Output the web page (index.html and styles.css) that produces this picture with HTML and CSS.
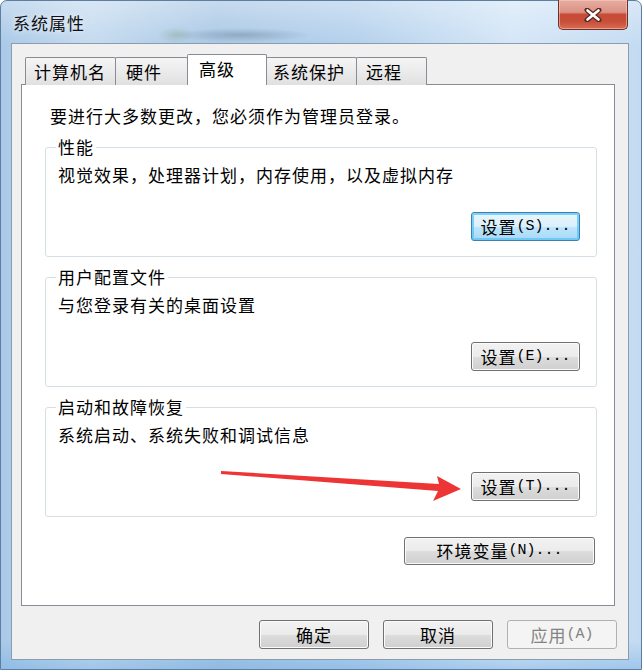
FILE: index.html
```html
<!DOCTYPE html>
<html lang="zh-CN">
<head>
<meta charset="utf-8">
<title>系统属性</title>
<link rel="stylesheet" href="styles.css">
</head>
<body>
<div class="window">
  <div class="titlebar">
    <div class="title">系统属性</div>
    <div class="close">
      <svg width="18" height="14" viewBox="0 0 18 14"><path d="M3 2 L15 12 M15 2 L3 12" stroke="#5a2a24" stroke-width="5" stroke-linecap="round"/><path d="M3.5 2.5 L14.5 11.5 M14.5 2.5 L3.5 11.5" stroke="#ffffff" stroke-width="2.6" stroke-linecap="round"/></svg>
    </div>
  </div>
  <div class="client">
    <div class="tabs">
      <div class="tab t1">计算机名</div>
      <div class="tab t2">硬件</div>
      <div class="tab t3 active">高级</div>
      <div class="tab t4">系统保护</div>
      <div class="tab t5">远程</div>
    </div>
    <div class="panel">
      <div class="intro">要进行大多数更改，您必须作为管理员登录。</div>
      <fieldset class="group">
        <legend>性能</legend>
        <div class="desc">视觉效果，处理器计划，内存使用，以及虚拟内存</div>
        <div class="btnrow"><button class="btn gbtn default">设置<span class="m">(S)...</span></button></div>
      </fieldset>
      <fieldset class="group">
        <legend>用户配置文件</legend>
        <div class="desc">与您登录有关的桌面设置</div>
        <div class="btnrow"><button class="btn gbtn">设置<span class="m">(E)...</span></button></div>
      </fieldset>
      <fieldset class="group">
        <legend>启动和故障恢复</legend>
        <div class="desc">系统启动、系统失败和调试信息</div>
        <div class="btnrow"><button class="btn gbtn">设置<span class="m">(T)...</span></button></div>
      </fieldset>
      <div class="envrow"><button class="btn envbtn">环境变量<span class="m">(N)...</span></button></div>
    </div>
    <div class="footer">
      <button class="btn fbtn">确定</button>
      <button class="btn fbtn">取消</button>
      <button class="btn fbtn disabled">应用<span class="m">(A)</span></button>
    </div>
  </div>
</div>
<svg class="arrow" width="642" height="670" viewBox="0 0 642 670">
  <polygon points="221,471 439,484 437,476 461,489 433,501 438,491 221,474" fill="#ee3535"/>
</svg>
</body>
</html>
```
FILE: styles.css
```css
html, body {
  margin: 0;
  padding: 0;
}
body {
  width: 642px;
  height: 670px;
  position: relative;
  overflow: hidden;
  font-family: "Noto Sans CJK SC", sans-serif;
  font-size: 17px;
  letter-spacing: 1px;
  color: #000;
  background: #ffffff;
}
.window {
  box-sizing: border-box;
  width: 642px;
  height: 670px;
  border: 1px solid #5f7d9e;
  border-radius: 7px 7px 0 0;
  display: flex;
  flex-direction: column;
  background:
    radial-gradient(ellipse 70px 7px at 240px 34px, rgba(85,105,125,0.35), rgba(85,105,125,0) 100%),
    radial-gradient(ellipse 18px 8px at 175px 34px, rgba(120,150,110,0.3), rgba(120,150,110,0) 100%),
    linear-gradient(180deg, rgba(255,255,255,0.35) 0, rgba(255,255,255,0) 44px),
    linear-gradient(180deg, rgba(120,175,225,0) 0, rgba(120,175,225,0) 640px, rgba(110,170,225,0.45) 670px),
    linear-gradient(90deg, #a9c9e8 0%, #c4daef 14%, #a8c7e5 34%, #b3d0ec 55%, #d4e6f7 80%, #c3dbf2 100%);
}
.titlebar {
  height: 42px;
  display: flex;
  align-items: flex-start;
  padding-left: 12px;
}
.title {
  margin-top: 12px;
  line-height: 20px;
  color: #111;
  text-shadow: 0 0 6px rgba(255,255,255,0.9);
}
.close {
  margin-left: auto;
  margin-right: 13px;
  margin-top: -1px;
  width: 70px;
  height: 30px;
  box-sizing: border-box;
  border: 1px solid #6e3028;
  border-top: none;
  border-radius: 0 0 5px 5px;
  background: linear-gradient(180deg, #e6ada2 0%, #dc9284 42%, #c84a37 50%, #c7503a 75%, #db6c53 100%);
  box-shadow: inset 0 0 0 1px rgba(255,210,200,0.5);
  display: flex;
  align-items: center;
  justify-content: center;
}
.client {
  box-sizing: border-box;
  margin: 0 12px 0 10px;
  height: 617px;
  background: #f0f0f0;
  border: 1px solid #8d9cad;
  display: flex;
  flex-direction: column;
}
.tabs {
  display: flex;
  align-items: flex-end;
  height: 30px;
  margin-top: 10px;
  padding-left: 13px;
  position: relative;
  z-index: 1;
}
.tab {
  box-sizing: border-box;
  height: 28px;
  margin-left: -1px;
  margin-bottom: -1px;
  border: 1px solid #898c95;
  border-bottom: none;
  border-radius: 2px 2px 0 0;
  background: linear-gradient(180deg, #f5f5f5 0%, #ececec 45%, #e0e0e0 100%);
  padding-left: 8px;
  line-height: 27px;
  white-space: nowrap;
}
.t1 { margin-left: 0; width: 91px; }
.t2 { width: 73px; padding-left: 10px; }
.t3 { width: 80px; }
.t4 { width: 91px; padding-left: 6px; }
.t5 { width: 71px; padding-left: 9px; }
.tab.active {
  height: 31px;
  background: #ffffff;
  padding-left: 11px;
  line-height: 28px;
}
.panel {
  box-sizing: border-box;
  margin-left: 9px;
  width: 594px;
  height: 522px;
  background: #ffffff;
  border: 1px solid #898c95;
  padding: 0 17px 0 23px;
  display: flex;
  flex-direction: column;
}
.intro {
  margin-top: 21px;
  margin-left: 5px;
  line-height: 20px;
  height: 20px;
  white-space: nowrap;
}
.group {
  margin: 10px 0 0 0;
  padding: 8px 16px 15px 12px;
  border: 1px solid #d5dfe5;
  border-radius: 3px;
  min-inline-size: 0;
}
.intro + .group {
  margin-top: 11px;
}
.group legend {
  padding: 0 2px;
  margin-left: -2px;
  line-height: 20px;
}
.desc {
  line-height: 20px;
  height: 20px;
  white-space: nowrap;
}
.btnrow {
  display: flex;
  justify-content: flex-end;
  margin-top: 27px;
}
.btn {
  box-sizing: border-box;
  font-family: "Noto Sans CJK SC", sans-serif;
  font-size: 17px;
  letter-spacing: 1px;
  color: #000;
  height: 29px;
  padding: 0;
  border: 1px solid #707070;
  border-radius: 3px;
  background: linear-gradient(180deg, #f2f2f2 0%, #ebebeb 50%, #dddddd 51%, #cfcfcf 100%);
  box-shadow: inset 0 0 0 1px #fbfbfb;
  line-height: 26px;
  white-space: nowrap;
  display: flex;
  align-items: center;
  justify-content: center;
}
.m {
  font-family: "Liberation Mono", monospace;
  font-size: 15px;
  letter-spacing: 0;
}
.gbtn {
  width: 109px;
}
.btn.default {
  border-color: #3c7fb1;
  background: linear-gradient(180deg, #eaf6fd 0%, #d9f0fc 50%, #bee6fd 51%, #a7d9f5 100%);
  box-shadow: inset 0 0 0 2px rgba(90,195,245,0.75);
}
.envrow {
  display: flex;
  justify-content: flex-end;
  margin-top: 20px;
  margin-right: 2px;
}
.envbtn {
  width: 191px;
  height: 28px;
}
.footer {
  display: flex;
  justify-content: flex-end;
  gap: 14px;
  margin-top: 14px;
  margin-right: 11px;
}
.fbtn {
  width: 110px;
}
.btn.disabled {
  border-color: #adb2b5;
  background: #f4f4f4;
  box-shadow: none;
  color: #838383;
}
.arrow {
  position: absolute;
  left: 0;
  top: 0;
  pointer-events: none;
}
```
